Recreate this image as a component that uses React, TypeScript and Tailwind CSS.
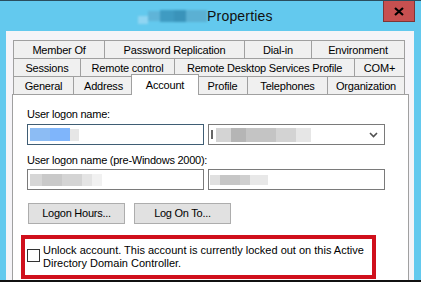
import React from "react";

function Tab({ w, label, last }: { w: string; label: string; last?: boolean }) {
  return (
    <div
      className={`${w} h-full shrink-0 border-t border-l ${last ? "border-r" : ""} border-[#a0a0a0] bg-[#f0f0f0] flex items-center justify-center text-[11px] tracking-[-0.2px] whitespace-nowrap pt-px`}
    >
      {label}
    </div>
  );
}

export default function App() {
  return (
    <div className="w-[421px] h-[282px] overflow-hidden bg-[#63c9ee] flex flex-col font-['Liberation_Sans',Arial,sans-serif] text-black">
      <div className="h-px bg-[#2a4d5e] shrink-0" />
      {/* title bar */}
      <div className="h-[30px] shrink-0 relative flex items-center pl-[138px]">
        <div className="flex items-center h-[15px] w-[69px] blur-[0.8px]">
          <div className="w-[10px] h-[8px] mt-[8px] bg-[#8fd5f2]" />
          <div className="w-[12px] h-[10px] bg-[#5fb4d8]" />
          <div className="w-[14px] h-[12px] bg-[#3f9bc2]" />
          <div className="w-[12px] h-[12px] bg-[#3a93ba]" />
          <div className="w-[21px] h-[12px] bg-[#5bb0d3]" />
        </div>
        <span className="text-[14px] text-[#111] tracking-[0.2px]">Properties</span>
        <div className="absolute left-[383px] top-0 w-[32px] h-[21px] bg-[#c75050] border border-t-0 border-[#7e3535] flex items-center justify-center">
          <svg width="10" height="9" viewBox="0 0 10 9">
            <path d="M1 1 L9 8 M9 1 L1 8" stroke="#000" strokeWidth="2.2" />
          </svg>
        </div>
      </div>
      {/* dialog body */}
      <div className="flex-1 min-h-0 ml-[6px] mr-[7px] bg-[#f5f4f8] pt-[9px] pl-[6px] pr-[5px] flex flex-col">
        {/* tabs */}
        <div className="flex h-[18px] ml-px">
          <Tab w="w-[91px]" label="Member Of" />
          <Tab w="w-[140px]" label="Password Replication" />
          <Tab w="w-[67px]" label="Dial-in" />
          <Tab w="w-[94px]" label="Environment" last />
        </div>
        <div className="flex h-[18px] ml-px">
          <Tab w="w-[67px]" label="Sessions" />
          <Tab w="w-[94px]" label="Remote control" />
          <Tab w="w-[180px]" label="Remote Desktop Services Profile" />
          <Tab w="w-[51px]" label="COM+" last />
        </div>
        <div className="flex h-[18px] ml-px">
          <Tab w="w-[60px]" label="General" />
          <Tab w="w-[60px]" label="Address" />
          <div className="relative z-10 -mx-[2px] -mt-[2px] h-[21px] w-[68px] shrink-0 bg-white border-t border-l border-r border-[#a0a0a0] flex items-start justify-center pt-[2px] text-[11px] tracking-[-0.2px]">
            Account
          </div>
          <Tab w="w-[50px]" label="Profile" />
          <Tab w="w-[80px]" label="Telephones" />
          <Tab w="w-[78px]" label="Organization" last />
        </div>
        {/* panel */}
        <div className="flex-1 bg-white border border-b-0 border-[#a0a0a0] pl-[14px] pt-[13px] text-[11px] leading-[13px] tracking-[-0.25px]">
          <div>User logon name:</div>
          <div className="flex gap-[4px] mt-[3px]">
            <div className="w-[177px] h-[21px] border border-[#3f5d74] bg-white flex items-center pl-[2px]">
              <div className="flex items-center blur-[0.6px]">
                <div className="w-[20px] h-[13px] bg-[#8cbcf4]" />
                <div className="w-[20px] h-[13px] bg-[#7fb5fb]" />
                <div className="w-[9px] h-[12px] bg-[#e6e6e6]" />
              </div>
            </div>
            <div className="w-[177px] h-[21px] border border-[#7a7a7a] bg-white flex items-center pl-[2px] pr-[6px]">
              <div className="w-[2px] h-[9px] bg-[#666]" />
              <div className="flex items-center ml-[3px] blur-[0.6px]">
                <div className="w-[15px] h-[14px] bg-[#d4d4d4]" />
                <div className="w-[15px] h-[14px] bg-[#b5b5b5]" />
                <div className="w-[30px] h-[14px] bg-[#c4c4c4]" />
                <div className="w-[20px] h-[14px] bg-[#d3d3d3]" />
                <div className="w-[15px] h-[14px] bg-[#e6e6e6]" />
              </div>
              <svg className="ml-auto" width="9" height="6" viewBox="0 0 9 6">
                <path d="M1 1 L4.5 4.5 L8 1" stroke="#505050" strokeWidth="1.6" fill="none" />
              </svg>
            </div>
          </div>
          <div className="mt-[9px]">User logon name (pre-Windows 2000):</div>
          <div className="flex gap-[4px] mt-[2px]">
            <div className="w-[177px] h-[21px] border border-[#7a7a7a] bg-white flex items-center pl-[2px]">
              <div className="flex items-center blur-[0.6px]">
                <div className="w-[12px] h-[12px] bg-[#d6d6d6]" />
                <div className="w-[20px] h-[12px] bg-[#c9c9c9]" />
                <div className="w-[20px] h-[12px] bg-[#d4d4d4]" />
                <div className="w-[10px] h-[12px] bg-[#e4e4e4]" />
                <div className="w-[10px] h-[12px] bg-[#f1f1f1]" />
              </div>
            </div>
            <div className="w-[177px] h-[21px] border border-[#7a7a7a] bg-white flex items-center pl-[1px]">
              <div className="flex items-center blur-[0.6px]">
                <div className="w-[10px] h-[10px] bg-[#e0e0e0]" />
                <div className="w-[20px] h-[10px] bg-[#c6c6c6]" />
                <div className="w-[10px] h-[10px] bg-[#cfcfcf]" />
                <div className="w-[18px] h-[10px] bg-[#e8e8e8]" />
              </div>
            </div>
          </div>
          <div className="flex gap-[9px] mt-[13px] ml-px">
            <div className="w-[97px] h-[21px] bg-[#e1e1e1] border border-[#adadad] flex items-center justify-center">
              Logon Hours...
            </div>
            <div className="w-[97px] h-[21px] bg-[#e1e1e1] border border-[#adadad] flex items-center justify-center">
              Log On To...
            </div>
          </div>
          <div className="-ml-[6px] mt-[11px] w-[355px] h-[44px] border-4 border-[#d0101c] flex items-start pl-[2px] pt-[5px]">
            <div className="w-[13px] h-[13px] border border-[#333] bg-white mt-[5px] shrink-0" />
            <div className="ml-[3px] leading-[13px] tracking-[0px]">
              Unlock account. This account is currently locked out on this Active
              <br />
              Directory Domain Controller.
            </div>
          </div>
        </div>
      </div>
      <div className="h-[2px] bg-[#111] shrink-0" />
    </div>
  );
}
